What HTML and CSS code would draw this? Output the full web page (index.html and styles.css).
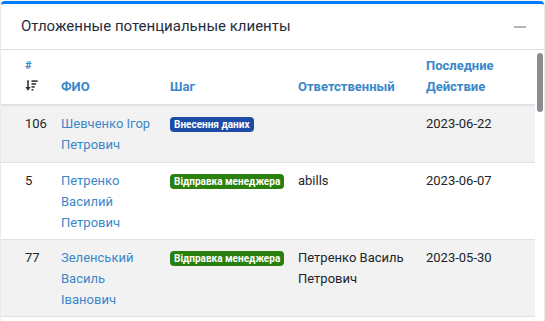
FILE: index.html
```html
<!DOCTYPE html>
<html lang="ru">
<head>
    <meta charset="UTF-8">
    <meta name="viewport" content="width=device-width, initial-scale=1.0">
    <title>Отложенные потенциальные клиенты</title>
    <link rel="stylesheet" href="styles.css">
</head>
<body>

    <div class="card">
        <div class="card-header">
            <h3 class="card-title">Отложенные потенциальные клиенты</h3>
            <button type="button" class="btn-tool" title="Свернуть"><span class="minus"></span></button>
        </div>

        <div class="card-body">
            <table class="leads">
                <colgroup>
                    <col class="c-id">
                    <col class="c-fio">
                    <col class="c-step">
                    <col class="c-resp">
                    <col class="c-date">
                </colgroup>
                <thead>
                    <tr>
                        <th>
                            <a href="#" class="hash">#</a>
                            <span class="sort-icon">
                                <!-- sort-amount-down -->
                                <svg width="13" height="11" viewBox="0 0 13 11">
                                    <path d="M3 0.3v7.7" stroke="#333" stroke-width="1.6" fill="none"/>
                                    <path d="M0.3 7h5.4L3 10.8z" fill="#333"/>
                                    <rect x="6.5" y="0.3" width="6.2" height="1.6" fill="#333"/>
                                    <rect x="6.5" y="3.2" width="4.6" height="1.6" fill="#333"/>
                                    <rect x="6.5" y="6.1" width="3.2" height="1.6" fill="#333"/>
                                    <rect x="6.5" y="9" width="1.8" height="1.6" fill="#333"/>
                                </svg>
                            </span>
                        </th>
                        <th><a href="#">ФИО</a></th>
                        <th><a href="#">Шаг</a></th>
                        <th><a href="#">Ответственный</a></th>
                        <th><a href="#">Последние Действие</a></th>
                    </tr>
                </thead>
                <tbody>
                    <tr>
                        <td>106</td>
                        <td><a href="#">Шевченко Ігор Петрович</a></td>
                        <td><span class="badge badge-blue">Внесення даних</span></td>
                        <td></td>
                        <td>2023-06-22</td>
                    </tr>
                    <tr>
                        <td>5</td>
                        <td><a href="#">Петренко Василий Петрович</a></td>
                        <td><span class="badge badge-green">Відправка менеджера</span></td>
                        <td>abills</td>
                        <td>2023-06-07</td>
                    </tr>
                    <tr>
                        <td>77</td>
                        <td><a href="#">Зеленський Василь Іванович</a></td>
                        <td><span class="badge badge-green">Відправка менеджера</span></td>
                        <td>Петренко Василь Петрович</td>
                        <td>2023-05-30</td>
                    </tr>
                </tbody>
            </table>
        </div>

        <!-- scroll thumb of the list -->
        <span class="scroll-thumb"></span>
    </div>

</body>
</html>
```

FILE: styles.css
```css
html, body {
    height: 100%;
}

body {
    margin: 0;
    padding: 1px 1px 0 1px;
    box-sizing: border-box;
    font-family: Roboto, 'Open Sans', sans-serif;
    font-size: 13px;
    line-height: 21px;
    color: #212529;
    background-color: #ffffff;
}

a {
    color: #3a88c9;
    text-decoration: none;
}

.card {
    position: relative;
    display: flex;
    flex-direction: column;
    height: 319px;
    background-color: #ffffff;
    border-top: 3px solid #007bff;
    border-radius: 4px;
    box-shadow: 0 0 1px rgba(0, 0, 0, 0.13), 0 1px 3px rgba(0, 0, 0, 0.2);
    overflow: hidden;
}

.card-header {
    display: flex;
    align-items: center;
    justify-content: space-between;
    height: 45px;
    padding: 0 18px 0 20px;
    border-bottom: 1px solid #dcdfe3;
    flex-shrink: 0;
}

.card-title {
    margin: 0;
    font-size: 15px;
    font-weight: 400;
    color: #1f2d3d;
}

.btn-tool {
    background: none;
    border: none;
    padding: 4px 0;
    cursor: pointer;
}

.minus {
    display: block;
    width: 12px;
    height: 2px;
    background-color: #adb5bd;
}

.card-body {
    flex: 1;
    overflow: hidden;
}

.scroll-thumb {
    position: absolute;
    top: 49px;
    right: 1px;
    width: 6px;
    height: 59px;
    background-color: #8a8c8f;
    border-radius: 3px;
}

.leads {
    width: 534px;
    table-layout: fixed;
    border-collapse: collapse;
    border-bottom: 1px solid #dee2e6;
}

.c-id { width: 57px; }
.c-fio { width: 109px; }
.c-step { width: 128px; }
.c-resp { width: 128px; }
.c-date { width: 112px; }

.leads th {
    text-align: left;
    vertical-align: bottom;
    font-weight: 700;
    line-height: 21px;
    padding: 5px 3px 7px 3px;
    border-bottom: 2px solid #dee2e6;
}

.leads th:first-child,
.leads td:first-child {
    padding-left: 24px;
}

.hash {
    display: block;
    font-size: 11px;
}

.sort-icon {
    display: block;
    height: 21px;
    padding-top: 4px;
    box-sizing: border-box;
}

.sort-icon svg {
    display: block;
}

.leads td {
    vertical-align: top;
    padding: 7px 3px 6px 3px;
    border-top: 1px solid #dee2e6;
}

.leads td:nth-child(2) {
    padding-right: 12px;
}

.leads tbody tr:first-child td {
    border-top: none;
    padding-bottom: 7px;
}

.leads tbody tr:nth-child(odd) {
    background-color: #f2f2f2;
}

.badge {
    display: inline-block;
    margin-top: 4px;
    padding: 0 4px;
    font-size: 10px;
    font-weight: 700;
    line-height: 15px;
    color: #ffffff;
    border-radius: 4px;
    white-space: nowrap;
    vertical-align: top;
}

.badge-blue {
    background-color: #1d4ba6;
}

.badge-green {
    background-color: #2b7f0c;
}
```
